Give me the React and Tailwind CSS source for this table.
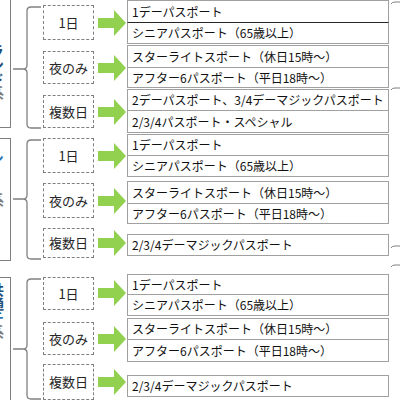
const FONT = { fontFamily: '"Noto Sans CJK JP", "Liberation Sans", sans-serif' }

const GROUPS = [
  {
    h: 133,
    hc: 'h-[133px]',
    left: { cls: 'mt-0 h-[128px] border-t-0', label: [['ランド', '#1f4e79'], ['系', '#7f7f7f']], labelCls: 'mt-[44px]' },
    brace: [7, 69, 128],
    items: [
      { label: '1日', cls: 'mt-[5px] h-[35px]' },
      { label: '夜のみ', cls: 'mt-[11px] h-[33px]' },
      { label: '複数日', cls: 'mt-[11px] h-[33px]' },
    ],
    boxes: [
      { cls: 'mt-0', rows: [['1デーパスポート', 'h-[23px]'], ['シニアパスポート（65歳以上）', 'h-[22px]']], dark: true },
      { cls: 'mt-px', rows: [['スターライトスポート（休日15時～）', 'h-[23px]'], ['アフター6パスポート（平日18時～）', 'h-[21px]']] },
      { cls: 'mt-px', rows: [['2デーパスポート、3/4デーマジックパスポート', 'h-[22px]'], ['2/3/4パスポート・スペシャル', 'h-[23px]']] },
    ],
    ticks: [2, 88],
  },
  {
    h: 137,
    hc: 'h-[137px]',
    left: { cls: 'mt-[5px] h-[123px]', label: [['シー', '#2e75b6'], ['ー', '#c55a11'], ['系', '#7f7f7f']], labelCls: 'mt-[12px]' },
    brace: [7, 66, 126],
    items: [
      { label: '1日', cls: 'mt-[5px] h-[35px]' },
      { label: '夜のみ', cls: 'mt-[10px] h-[35px]' },
      { label: '複数日', cls: 'mt-[10px] h-[30px]' },
    ],
    boxes: [
      { cls: 'mt-px', rows: [['1デーパスポート', 'h-[22px]'], ['シニアパスポート（65歳以上）', 'h-[22px]']] },
      { cls: 'mt-[4px]', rows: [['スターライトスポート（休日15時～）', 'h-[23px]'], ['アフター6パスポート（平日18時～）', 'h-[21px]']] },
      { cls: 'mt-[10px]', rows: [['2/3/4デーマジックパスポート', 'h-[22px]']] },
    ],
    ticks: [113, 132],
  },
  {
    h: 130,
    hc: 'h-[130px]',
    left: { cls: 'mt-[7px] h-[140px] border-b-0', label: [['共通', '#1f4e79'], ['チ', '#2e75b6'], ['系', '#7f7f7f']], labelCls: 'mt-[5px]' },
    brace: [9, 79, 129],
    items: [
      { label: '1日', cls: 'mt-[7px] h-[34px]' },
      { label: '夜のみ', cls: 'mt-[12px] h-[35px]' },
      { label: '複数日', cls: 'mt-[9px] h-[37px]' },
    ],
    boxes: [
      { cls: 'mt-[4px]', rows: [['1デーパスポート', 'h-[21px]'], ['シニアパスポート（65歳以上）', 'h-[22px]']] },
      { cls: 'mt-[2px]', rows: [['スターライトスポート（休日15時～）', 'h-[22px]'], ['アフター6パスポート（平日18時～）', 'h-[23px]']] },
      { cls: 'mt-[13px]', rows: [['2/3/4デーマジックパスポート', 'h-[22px]']] },
    ],
    ticks: [],
  },
]

function Arrow() {
  return (
    <svg width="30" height="28" viewBox="0 0 30 28" className="shrink-0">
      <polygon points="2,9 18,9 18,1 30,14 18,27 18,19 2,19" fill="#92d050" />
    </svg>
  )
}

// curly brace; its column starts at x=11
function Brace({ top, mid, bot, h }) {
  const d = `M30 ${top} L20 ${top} Q16 ${top} 16 ${top + 4} L16 ${mid - 4} Q16 ${mid} 12 ${mid} L2 ${mid} M12 ${mid} Q16 ${mid} 16 ${mid + 4} L16 ${bot - 4} Q16 ${bot} 20 ${bot} L30 ${bot}`
  return (
    <svg width="32" height={h} className="shrink-0">
      <path d={d} fill="none" stroke="#808080" strokeWidth="1.3" />
    </svg>
  )
}

function LeftBox({ cls, label, labelCls }) {
  return (
    <div className="w-[11px] shrink-0 overflow-hidden">
      <div className={`ml-[-30px] w-[41px] border border-[#7f7f7f] flex justify-end pr-[6px] ${cls}`}>
        <div className={`[writing-mode:vertical-rl] text-[14px] leading-[14px] font-bold ${labelCls}`}>
          {label.map(([t, c], i) => (
            <span key={i} style={{ color: c }}>{t}</span>
          ))}
        </div>
      </div>
    </div>
  )
}

function PassBox({ cls, rows, dark }) {
  return (
    <div className={cls}>
      {rows.map(([t, h], i) => (
        <div
          key={i}
          className={`border border-[#a0a0a0] pl-[4px] flex items-center text-[12px] text-[#111] whitespace-nowrap ${h} ${i > 0 ? '-mt-px' : ''} ${i > 0 && dark ? 'border-t-[#262626]' : ''}`}
        >
          {t}
        </div>
      ))}
    </div>
  )
}

function Group({ g }) {
  return (
    <div className={`flex ${g.hc}`}>
      <LeftBox {...g.left} />
      <Brace top={g.brace[0]} mid={g.brace[1]} bot={g.brace[2]} h={g.h} />
      <div className="w-[84px] shrink-0 flex flex-col">
        {g.items.map((it, i) => (
          <div key={i} className={`flex items-center ${it.cls}`}>
            <div className="w-[51px] h-full border border-dashed border-[#7f7f7f] flex items-center justify-center text-[13px] text-[#262626] shrink-0">
              {it.label}
            </div>
            <div className="ml-[2px]">
              <Arrow />
            </div>
          </div>
        ))}
      </div>
      <div className="w-[262px] shrink-0 flex flex-col">
        {g.boxes.map((b, i) => (
          <PassBox key={i} {...b} />
        ))}
      </div>
      <svg width="11" height={g.h} className="shrink-0">
        {g.ticks.map((y, i) => (
          <path key={i} d={`M2 ${y + 2} Q3 ${y} 6 ${y} L11 ${y}`} fill="none" stroke="#808080" strokeWidth="1" />
        ))}
      </svg>
    </div>
  )
}

export default function App() {
  return (
    <div className="w-[400px] h-[400px] overflow-hidden bg-white" style={FONT}>
      {GROUPS.map((g, i) => (
        <Group key={i} g={g} />
      ))}
    </div>
  )
}
